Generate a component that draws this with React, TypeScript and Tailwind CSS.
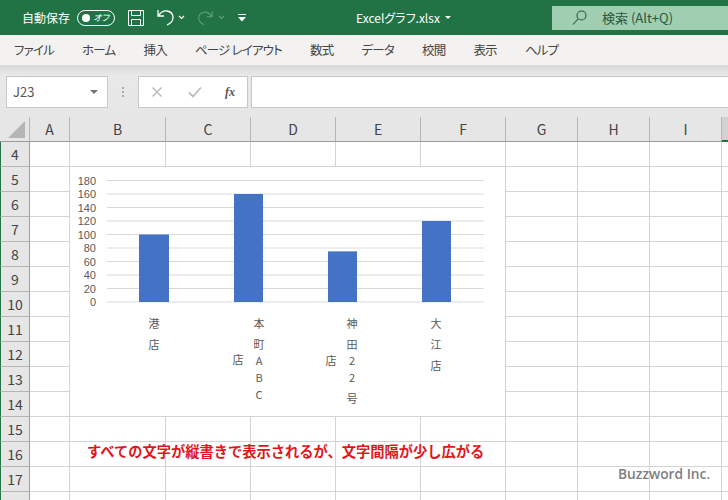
const columns = [
  { label: 'A', width: 'w-[40px]' },
  { label: 'B', width: 'w-[96px]' },
  { label: 'C', width: 'w-[85px]' },
  { label: 'D', width: 'w-[85px]' },
  { label: 'E', width: 'w-[85px]' },
  { label: 'F', width: 'w-[85px]' },
  { label: 'G', width: 'w-[72px]' },
  { label: 'H', width: 'w-[72px]' },
  { label: 'I', width: 'w-[72px]' },
];
const rows = [4, 5, 6, 7, 8, 9, 10, 11, 12, 13, 14, 15, 16, 17, 18];
const menus = ['ファイル', 'ホーム', '挿入', 'ページ レイアウト', '数式', 'データ', '校閲', '表示', 'ヘルプ'];

const ticks = [180, 160, 140, 120, 100, 80, 60, 40, 20, 0];
const bars = [
  { x: 69, w: 30, value: 100 },
  { x: 164, w: 29, value: 160 },
  { x: 258, w: 29, value: 75 },
  { x: 352, w: 29, value: 120 },
];
// chart-local coordinates, origin is the chart's top left corner
const labels = [
  ['港', 84, 161], ['店', 84, 182],
  ['本', 189, 161], ['町', 189, 182], ['A', 189, 198], ['B', 189, 215], ['C', 189, 232], ['店', 168, 197],
  ['神', 282, 161], ['田', 282, 182], ['2', 282, 198], ['2', 282, 215], ['号', 282, 236], ['店', 261, 198],
  ['大', 366, 161], ['江', 366, 182], ['店', 366, 203],
] as const;

function Chevron({ className }: { className: string }) {
  return (
    <svg className={className} width="7" height="5" viewBox="0 0 7 5" fill="none" stroke="currentColor" strokeWidth="1.2">
      <path d="M1 1l2.5 2.5L6 1" />
    </svg>
  );
}

function TitleBar() {
  return (
    <div className="h-[35px] bg-[#217346] flex items-center text-white text-[12px] pl-[22px] [font-feature-settings:'palt']">
      <span className="w-[48px] whitespace-nowrap [font-feature-settings:'normal']">自動保存</span>
      <div className="ml-[7px] w-[38px] h-[16px] rounded-full border border-white flex items-center justify-between pl-[4px] pr-[5px]">
        <span className="w-[8px] h-[8px] rounded-full bg-white" />
        <span className="text-[9px] leading-none italic">オフ</span>
      </div>
      <svg className="ml-[13px]" width="16" height="16" viewBox="0 0 16 16" fill="none" stroke="white" strokeWidth="1">
        <path d="M.5.5h15v15H.5z" />
        <path d="M3.5.5v5h9v-5M3.5 15.5v-6h9v6" />
      </svg>
      <svg className="ml-[13px]" width="18" height="17" viewBox="0 0 18 17" fill="none" stroke="white" strokeWidth="1.3">
        <path d="M1 1v6h6M1.5 6.5C4 3 7 1.5 10 2c3.5.6 6 3.2 6 6.5 0 3.500-2.500 6-6 7.500" />
      </svg>
      <Chevron className="ml-[3px] text-white" />
      <svg className="ml-[12px]" width="16" height="16" viewBox="0 0 18 17" fill="none" stroke="#5f9f7c" strokeWidth="1.2">
        <path d="M17 1v6h-6M16.500 6.500C14 3 11 1.500 8 2 4.500 2.600 2 5.200 2 8.500c0 3.500 2.500 6 6 7.500" />
      </svg>
      <Chevron className="ml-[5px] text-[#5f9f7c]" />
      <svg className="ml-[13px]" width="8" height="8" viewBox="0 0 8 8" fill="white">
        <path d="M0 0h8v1H0zM0 3h8L4 7.500z" />
      </svg>
      <span className="ml-[110px] w-[82px] whitespace-nowrap">Excelグラフ.xlsx</span>
      <span className="ml-[7px] border-x-[3px] border-x-transparent border-t-[3px] border-t-white" />
      <div className="ml-[101px] w-[176px] h-[24px] bg-[#9fcfb0] flex items-center text-[#2d5540] pl-[20px]">
        <svg width="15" height="15" viewBox="0 0 15 15" fill="none" stroke="#2d5540" strokeWidth="1.100">
          <circle cx="9.500" cy="5.500" r="4.500" />
          <path d="M6 9l-5 5.500" />
        </svg>
        <span className="ml-[15px] text-[13px] whitespace-nowrap">検索 (Alt+Q)</span>
      </div>
    </div>
  );
}

function MenuBar() {
  return (
    <div className="h-[30px] bg-[#f3f2f1] flex items-center gap-[28px] pl-[14px] text-[12.5px] tracking-[-0.8px] text-[#444444] [font-feature-settings:'palt']">
      {menus.map((m) => (
        <span key={m} className="whitespace-nowrap">{m}</span>
      ))}
    </div>
  );
}

function FormulaBar() {
  return (
    <div className="h-[52px] bg-gradient-to-b from-[#d8d8d8] from-0% via-[#e9e9e9] via-20% to-[#e6e6e6] flex items-end pb-[9px] pl-[6px]">
      <div className="w-[102px] h-[32px] bg-white border border-[#c8c8c8] flex items-center justify-between pl-[6px] pr-[9px] text-[13px] text-[#555555]">
        <span>J23</span>
        <span className="border-x-[4px] border-x-transparent border-t-[4px] border-t-[#777777]" />
      </div>
      <div className="w-[30px] h-[32px] flex flex-col items-center justify-center gap-[2px]">
        <span className="w-[2px] h-[2px] bg-[#aaaaaa]" />
        <span className="w-[2px] h-[2px] bg-[#aaaaaa]" />
        <span className="w-[2px] h-[2px] bg-[#aaaaaa]" />
      </div>
      <div className="w-[110px] h-[32px] bg-white border border-[#c8c8c8] flex items-center pl-[12px]">
        <svg width="12" height="12" viewBox="0 0 12 12" fill="none" stroke="#bdbdbd" strokeWidth="1.500">
          <path d="M1.500 1.500l9 9M10.500 1.500l-9 9" />
        </svg>
        <svg className="ml-[25px]" width="14" height="12" viewBox="0 0 14 12" fill="none" stroke="#bdbdbd" strokeWidth="1.800">
          <path d="M1 6.500L5 10.500 13 1.500" />
        </svg>
        <span className="ml-[23px] text-[12px] italic font-bold text-[#555555] font-['Liberation_Serif',serif]">fx</span>
      </div>
      <div className="ml-[3px] flex-1 h-[32px] bg-white border-y border-l border-[#c8c8c8]" />
    </div>
  );
}

function ColumnHeader() {
  return (
    <div className="h-[25px] flex bg-[#e6e6e6] border-b border-[#9c9c9c] text-[14px] text-[#444444]">
      <div className="w-[30px] border-r border-[#b5b5b5] relative">
        <span className="absolute right-[4px] bottom-[3px] border-l-[17px] border-l-transparent border-b-[17px] border-b-[#b5b5b5]" />
      </div>
      {columns.map((c) => (
        <div key={c.label} className={`${c.width} flex items-center justify-center border-r border-[#b5b5b5]`}>
          {c.label}
        </div>
      ))}
      <div className="flex-1 bg-[#d2d2d2] border-b-2 border-[#217346] -mb-px" />
    </div>
  );
}

function SheetRow({ row }: { row: number }) {
  return (
    <div className="h-[25px] shrink-0 flex">
      <div className="w-[30px] bg-[#e6e6e6] border-l border-l-[#217346] border-r border-r-[#9c9c9c] border-b border-b-[#b5b5b5] flex items-center justify-center text-[14px] text-[#444444]">
        {row}
      </div>
      {columns.map((c) => (
        <div key={c.label} className={`${c.width} border-r border-b border-[#d4d4d4]`} />
      ))}
      <div className="flex-1 border-b border-[#d4d4d4]" />
    </div>
  );
}

function Chart() {
  const zero = 135;
  const step = 13.5 / 20;
  return (
    <div className="absolute left-[70px] top-[167px] w-[435px] h-[249px] bg-white">
      <svg width="435" height="249" viewBox="0 0 435 249" className="block font-['Noto_Sans_CJK_JP',sans-serif]">
        {ticks.map((t) => (
          <g key={t}>
            <line x1="37" x2="414" y1={zero - t * step} y2={zero - t * step} stroke="#d9d9d9" />
            <text x="26" y={zero - t * step + 4} textAnchor="end" fontSize="11" fill="#595959" fontFamily="'Liberation Sans', sans-serif">{t}</text>
          </g>
        ))}
        {bars.map((b) => (
          <rect key={b.x} x={b.x} y={zero - b.value * step} width={b.w} height={b.value * step} fill="#4472c4" />
        ))}
        {labels.map(([text, x, y]) => (
          <text key={`${text}${x}${y}`} x={x} y={y} textAnchor="middle" fontSize="11" fill="#595959">{text}</text>
        ))}
      </svg>
    </div>
  );
}

export default function App() {
  return (
    <div className="relative w-[728px] h-[500px] overflow-hidden bg-white font-['Noto_Sans_CJK_JP',sans-serif]">
      <TitleBar />
      <MenuBar />
      <FormulaBar />
      <ColumnHeader />
      <div className="flex flex-col">
        {rows.map((r) => (
          <SheetRow key={r} row={r} />
        ))}
      </div>
      <Chart />
      <p className="absolute left-[87px] top-[441px] whitespace-nowrap text-[14.25px] leading-[20px] font-bold text-[#e0161c]">
        すべての文字が縦書きで表示されるが、文字間隔が少し広がる
      </p>
      <p className="absolute left-[618px] top-[464px] whitespace-nowrap text-[13.75px] leading-[20px] font-semibold text-[#7f7f7f] font-['Open_Sans',sans-serif]">
        Buzzword Inc.
      </p>
    </div>
  );
}
